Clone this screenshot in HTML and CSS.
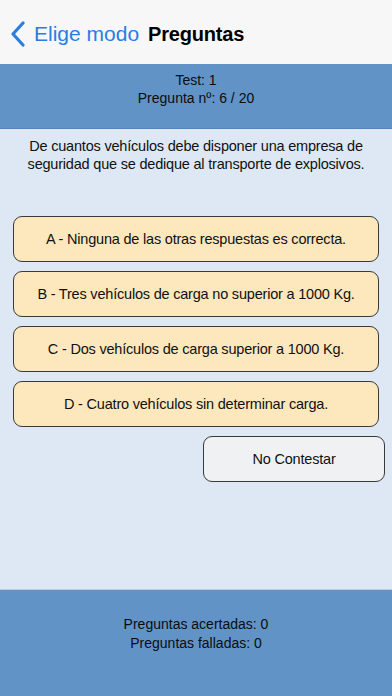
FILE: index.html
```html
<!DOCTYPE html>
<html lang="es">
<head>
  <meta charset="UTF-8" />
  <title>Preguntas</title>
  <meta name="viewport" content="width=device-width, initial-scale=1.0" />
  <link rel="stylesheet" href="styles.css">
</head>
<body>
  <div class="navbar">
    <a class="back" href="#">
      <svg class="chevron" width="16" height="26" viewBox="0 0 16 26">
        <path d="M13 2 L3 13 L13 24" fill="none" stroke="#2a7de1" stroke-width="3.2" stroke-linecap="round" stroke-linejoin="round"/>
      </svg>
      <span>Elige modo</span>
    </a>
    <span class="title">Preguntas</span>
  </div>

  <div class="info">
    <p>Test: 1</p>
    <p>Pregunta nº: 6 / 20</p>
  </div>

  <div class="main">
    <p class="question">De cuantos vehículos debe disponer una empresa de seguridad que se dedique al transporte de explosivos.</p>

    <div class="answers">
      <button class="answer">A - Ninguna de las otras respuestas es correcta.</button>
      <button class="answer">B - Tres vehículos de carga no superior a 1000 Kg.</button>
      <button class="answer">C - Dos vehículos de carga superior a 1000 Kg.</button>
      <button class="answer">D - Cuatro vehículos sin determinar carga.</button>
    </div>

    <div class="skip-row">
      <button class="skip">No Contestar</button>
    </div>
  </div>

  <div class="score">
    <p>Preguntas acertadas: 0</p>
    <p>Preguntas falladas: 0</p>
  </div>
</body>
</html>
```

FILE: styles.css
```css
html, body {
  margin: 0;
  height: 100%;
}
body {
  display: flex;
  flex-direction: column;
  font-family: 'Liberation Sans', Arial, sans-serif;
  color: #111;
  background: #dde8f4;
}
p {
  margin: 0;
}
.navbar {
  height: 64px;
  flex-shrink: 0;
  background: #f7f7f8;
  display: flex;
  align-items: center;
  padding: 4px 0 0 10px;
  box-sizing: border-box;
}
.back {
  display: flex;
  align-items: center;
  color: #2a7de1;
  text-decoration: none;
  font-size: 21px;
}
.chevron {
  margin-right: 8px;
}
.title {
  margin-left: 9px;
  font-size: 20px;
  font-weight: bold;
  letter-spacing: -0.2px;
  color: #000;
}
.info {
  height: 65px;
  flex-shrink: 0;
  box-sizing: border-box;
  background: #6193c7;
  border-bottom: 1px solid #5583b5;
  padding-top: 7px;
  text-align: center;
  font-size: 14px;
  line-height: 18px;
  color: #0c0c10;
}
.main {
  flex: 1;
  padding: 8px 13px 0;
}
.question {
  text-align: center;
  font-size: 14.5px;
  letter-spacing: -0.2px;
  line-height: 18px;
}
.answers {
  margin-top: 43px;
  display: flex;
  flex-direction: column;
  gap: 9px;
}
.answer, .skip {
  height: 46px;
  border: 1.5px solid #3a3a3a;
  border-radius: 9px;
  font-family: inherit;
  font-size: 14.5px;
  letter-spacing: -0.2px;
  color: #111;
  padding: 0;
}
.answer {
  background: #fde7bd;
}
.skip-row {
  display: flex;
  justify-content: flex-end;
  margin: 9px -6px 0 0;
}
.skip {
  width: 182px;
  background: #f0f1f3;
}
.score {
  height: 107px;
  flex-shrink: 0;
  box-sizing: border-box;
  background: #6193c7;
  border-top: 1px solid #b9cde3;
  padding-top: 25px;
  text-align: center;
  font-size: 14px;
  line-height: 19px;
  color: #0c0c10;
}
```
